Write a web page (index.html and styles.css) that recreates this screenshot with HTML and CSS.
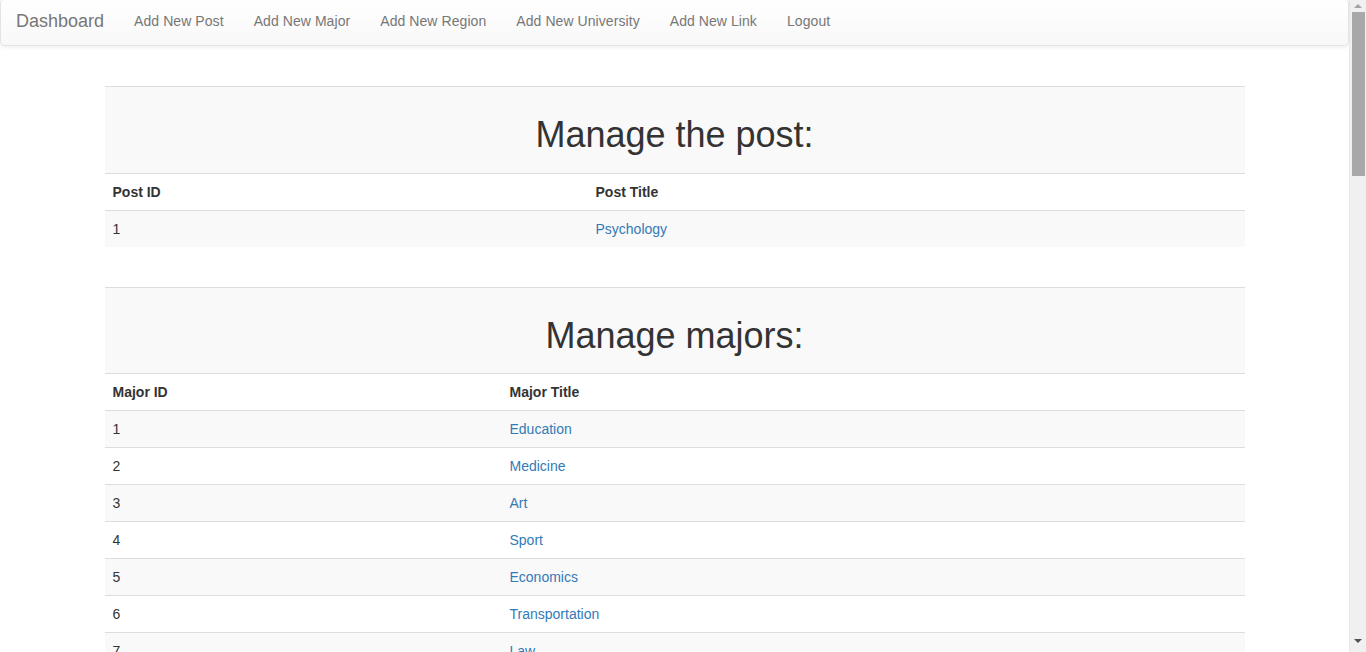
FILE: index.html
```html
<!DOCTYPE html>
<html>
<head>
<meta charset="utf-8">
<title>Dashboard</title>
<link rel="stylesheet" href="styles.css">
</head>
<body>
<div class="page">
  <nav class="navbar">
    <a class="brand" href="#">Dashboard</a>
    <ul class="nav">
      <li><a href="#">Add New Post</a></li>
      <li><a href="#">Add New Major</a></li>
      <li><a href="#">Add New Region</a></li>
      <li><a href="#">Add New University</a></li>
      <li><a href="#">Add New Link</a></li>
      <li><a href="#">Logout</a></li>
    </ul>
  </nav>
  <main class="container">
    <table class="table table-post">
      <tbody>
        <tr class="title-row"><td colspan="2"><h1>Manage the post:</h1></td></tr>
        <tr class="head-row"><th class="col-id">Post ID</th><th>Post Title</th></tr>
        <tr class="odd"><td>1</td><td><a href="#">Psychology</a></td></tr>
      </tbody>
    </table>
    <table class="table table-major">
      <tbody>
        <tr class="title-row"><td colspan="2"><h1>Manage majors:</h1></td></tr>
        <tr class="head-row"><th class="col-id">Major ID</th><th>Major Title</th></tr>
        <tr class="odd"><td>1</td><td><a href="#">Education</a></td></tr>
        <tr><td>2</td><td><a href="#">Medicine</a></td></tr>
        <tr class="odd"><td>3</td><td><a href="#">Art</a></td></tr>
        <tr><td>4</td><td><a href="#">Sport</a></td></tr>
        <tr class="odd"><td>5</td><td><a href="#">Economics</a></td></tr>
        <tr><td>6</td><td><a href="#">Transportation</a></td></tr>
        <tr class="odd"><td>7</td><td><a href="#">Law</a></td></tr>
      </tbody>
    </table>
    <div class="rest"></div>
  </main>
</div>
<aside class="scrollbar" aria-hidden="true">
  <span class="arrow arrow-up"></span>
  <span class="thumb"></span>
  <span class="track-rest"></span>
  <span class="arrow arrow-down"></span>
</aside>
</body>
</html>
```
FILE: styles.css
```css
* { box-sizing: border-box; }
html, body { margin: 0; padding: 0; }
body {
  display: flex;
  align-items: flex-start;
  font-family: "Liberation Sans", Arial, Helvetica, sans-serif;
  font-size: 14px;
  line-height: 1.42857143;
  color: #333;
  background: #fff;
}
a { color: #337ab7; text-decoration: none; }

.page {
  flex: 1;
  min-width: 0;
}

.navbar {
  display: flex;
  align-items: center;
  height: 47px;
  margin-top: -1px;
  padding-bottom: 4px;
  border: 1px solid #e4e4e4;
  border-radius: 4px;
  background: linear-gradient(to bottom, #ffffff 0%, #f8f8f8 100%);
  box-shadow: inset 0 1px 0 rgba(255,255,255,.15), 0 1px 5px rgba(0,0,0,.075);
}
.brand {
  padding: 0 15px;
  font-size: 18px;
  line-height: 20px;
  color: #777;
}
.nav {
  display: flex;
  list-style: none;
  margin: 0;
  padding: 0;
}
.nav a {
  display: block;
  padding: 0 15px;
  line-height: 20px;
  color: #777;
  letter-spacing: 0.07px;
}

.container {
  width: 1170px;
  margin: 0 auto;
  padding: 40px 15px 0;
}
.table {
  width: 100%;
  border-collapse: collapse;
  border-spacing: 0;
  margin-bottom: 40px;
}
.table td, .table th {
  padding: 8px;
  line-height: 20px;
  text-align: left;
  vertical-align: top;
  border-top: 1px solid #ddd;
}
.table th { font-weight: bold; }
.table-post .col-id { width: 483px; }
.table-major .col-id { width: 397px; }
.title-row td { background: #f9f9f9; text-align: center; }
.odd td { background: #f9f9f9; }
h1 {
  margin: 20px 0 10px;
  font-size: 36px;
  font-weight: 500;
  line-height: 1.1;
}
.rest { height: 1800px; }

.scrollbar {
  position: sticky;
  top: 0;
  flex: 0 0 17px;
  width: 17px;
  height: 100vh;
  display: flex;
  flex-direction: column;
  align-items: center;
  background: #f0f0f0;
  border-left: 1px solid #e8e8e8;
}
.arrow {
  flex: 0 0 12px;
  width: 100%;
  display: flex;
  justify-content: center;
  align-items: center;
}
.arrow::before {
  content: "";
  width: 0;
  height: 0;
  border-left: 4px solid transparent;
  border-right: 4px solid transparent;
}
.arrow-up::before { border-bottom: 4px solid #a3a3a3; }
.arrow-down::before { border-top: 4px solid #505050; }
.arrow-down { flex-basis: 16px; align-items: flex-start; padding-top: 3px; }
.thumb {
  flex: 0 0 164px;
  width: 13px;
  margin-left: 1px;
  background: #a8a8a8;
}
.track-rest { flex: 1; }
```
